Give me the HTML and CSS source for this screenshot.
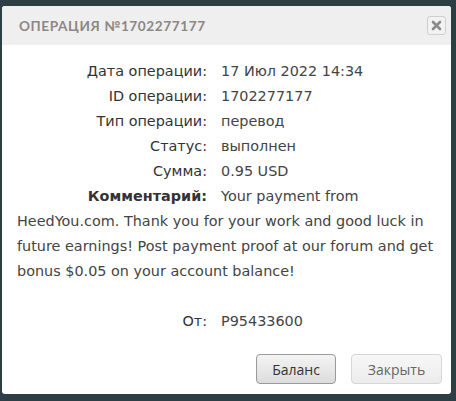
FILE: index.html
```html
<!DOCTYPE html>
<html lang="ru">
<head>
    <meta charset="UTF-8">
    <meta name="viewport" content="width=device-width, initial-scale=1.0">
    <title>Операция №1702277177</title>
    <link rel="stylesheet" href="styles.css">
</head>
<body>
    <div class="dialog">
        <div class="dialog-header">
            <span class="dialog-title">Операция №1702277177</span>
            <button type="button" class="close-btn" title="Закрыть">
                <svg width="11" height="11" viewBox="0 0 11 11">
                    <path d="M2 2 L9 9 M9 2 L2 9" stroke="#8a8a8a" stroke-width="2.6" stroke-linecap="round"/>
                </svg>
            </button>
        </div>
        <div class="dialog-body">
            <div class="row"><span class="label">Дата операции:</span><span class="value">17 Июл 2022 14:34</span></div>
            <div class="row"><span class="label">ID операции:</span><span class="value">1702277177</span></div>
            <div class="row"><span class="label">Тип операции:</span><span class="value">перевод</span></div>
            <div class="row"><span class="label">Статус:</span><span class="value">выполнен</span></div>
            <div class="row"><span class="label">Сумма:</span><span class="value">0.95 USD</span></div>
            <p class="comment"><span class="label label-strong">Комментарий:</span><span>Your payment from</span> <span>HeedYou.com. Thank you for your work and good luck in future earnings! Post payment proof at our forum and get bonus $0.05 on your account balance!</span></p>
            <div class="row row-from"><span class="label">От:</span><span class="value">P95433600</span></div>
        </div>
        <div class="dialog-footer">
            <button type="button" class="button button-main">Баланс</button>
            <button type="button" class="button button-light">Закрыть</button>
        </div>
    </div>
</body>
</html>
```

FILE: styles.css
```css
body {
    margin: 0;
    padding: 0;
    background-color: #2e3e45;
    font-family: "DejaVu Sans", sans-serif;
}

.dialog {
    margin: 6px 0 0 2px;
    width: 449px;
    height: 388px;
    background: #fff;
    border-radius: 3px;
    overflow: hidden;
    display: flex;
    flex-direction: column;
}

.dialog-header {
    height: 39px;
    background: #efefef;
    display: flex;
    align-items: center;
    justify-content: space-between;
    padding: 0 5px 0 17px;
}

.dialog-title {
    font-family: Lato, sans-serif;
    font-weight: bold;
    font-size: 13.6px;
    letter-spacing: 0.6px;
    text-transform: uppercase;
    color: #8c8883;
}

.close-btn {
    width: 19px;
    height: 19px;
    padding: 0;
    border: 1px solid #cfcfcf;
    border-radius: 3px;
    background: #f2f2f2;
    display: flex;
    align-items: center;
    justify-content: center;
    cursor: pointer;
}

.dialog-body {
    padding: 14px 8px 0 15px;
    font-size: 14.4px;
    line-height: 25px;
    color: #444;
}

.row {
    display: flex;
}

.label {
    display: inline-block;
    width: 190px;
    margin-right: 14px;
    text-align: right;
    color: #333;
}

.label-strong {
    font-weight: bold;
    margin-right: 14px;
}

.comment {
    margin: 0 0 25px 0;
}

.dialog-footer {
    margin-top: auto;
    display: flex;
    justify-content: flex-end;
    gap: 15px;
    padding: 0 9px 10px 0;
}

.button {
    height: 30px;
    padding: 0 14px;
    font-family: "Open Sans", sans-serif;
    font-size: 14px;
    border-radius: 4px;
    cursor: pointer;
}

.button-main {
    width: 80px;
    color: #333;
    border: 1px solid #9a9a9a;
    background: linear-gradient(#f4f4f4, #dcdcdc);
}

.button-light {
    width: 91px;
    color: #666;
    border: 1px solid #d6d6d6;
    background: linear-gradient(#f7f7f7, #ececec);
}
```
